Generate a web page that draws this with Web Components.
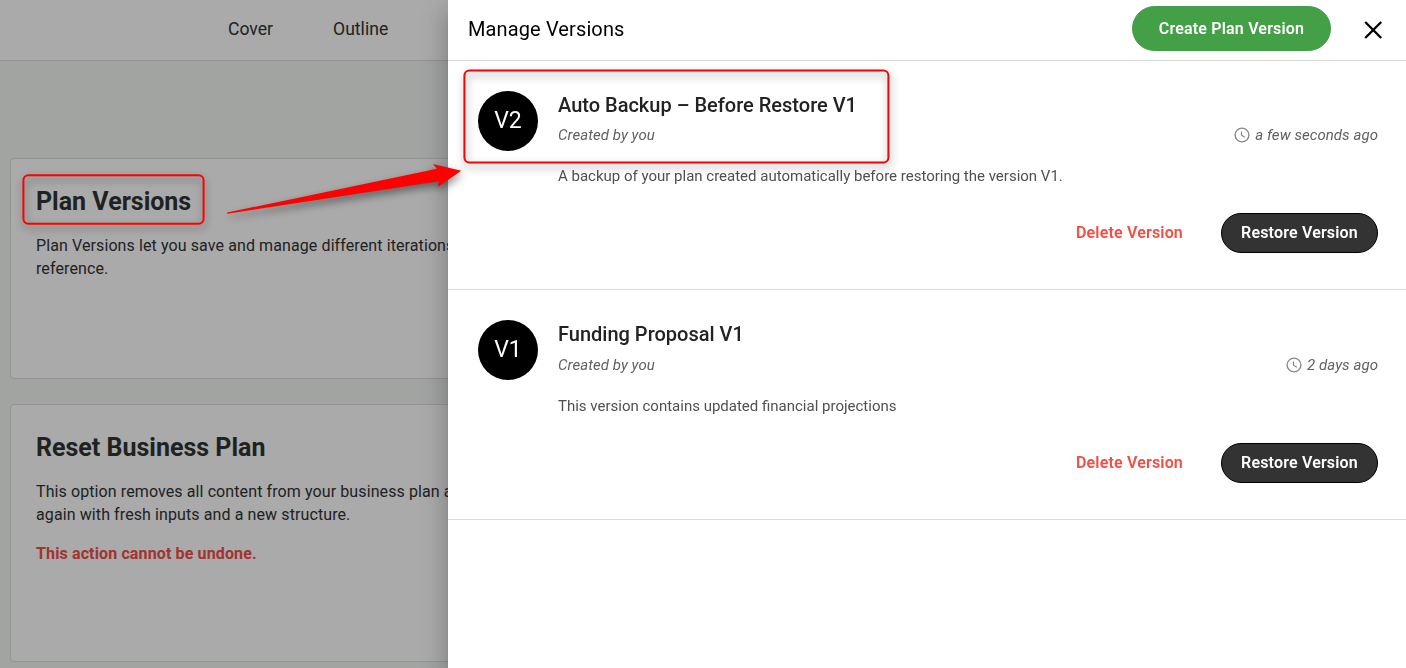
<!DOCTYPE html>
<html lang="en">
<head>
<meta charset="utf-8">
<title>Manage Versions</title>
<style>
    html, body {
        margin: 0;
        height: 100%;
        overflow: hidden;
    }

    body {
        font-family: Roboto, "Liberation Sans", sans-serif;
        font-size: 16px;
        color: #303333;
        background: #f3f6f4;
    }
</style>
</head>
<body>

<template id="plan-page-template">
    <style>
        :host {
            display: block;
            height: 100vh;
            overflow: hidden;
        }

        nav {
            display: flex;
            gap: 60px;
            height: 58px;
            padding: 0 0 2px 228px;
            align-items: center;
            background: white;
            border-bottom: 1px solid #dcdfdd;
            font-size: 17.6px;
            line-height: 24px;
        }

        main {
            display: flex;
            flex-direction: column;
            gap: 25px;
            padding: 97px 10px 0;
        }
    </style>
    <nav><span>Cover</span><span>Outline</span></nav>
    <main><slot></slot></main>
</template>

<template id="plan-card-template">
    <style>
        :host {
            display: block;
            box-sizing: border-box;
            padding: 26px 25px 0;
            background: white;
            border: 1px solid #dcdfdd;
            border-radius: 4px;
        }

        h2 {
            margin: 0 0 15px;
            font-size: 25px;
            line-height: 34px;
            font-weight: 700;
        }

        .text {
            line-height: 23px;
            letter-spacing: .1px;
            white-space: nowrap;
        }

        .warning {
            margin-top: 16px;
            line-height: 23px;
            font-weight: 700;
            letter-spacing: .13px;
            color: #f44d47;
        }
    </style>
    <h2><slot name="title"></slot></h2>
    <div class="text"><slot></slot></div>
    <div class="warning"><slot name="warning"></slot></div>
</template>

<template id="side-drawer-template">
    <style>
        :host {
            position: fixed;
            inset: 0;
            display: flex;
            justify-content: flex-end;
            background: rgba(0, 0, 0, .335);
        }

        .panel {
            width: 958px;
            background: white;
            box-shadow: 0 8px 10px -5px rgba(0, 0, 0, .2),
                        0 16px 24px 2px rgba(0, 0, 0, .14),
                        0 6px 30px 5px rgba(0, 0, 0, .12);
        }

        header {
            display: flex;
            align-items: center;
            height: 57px;
            padding: 0 21px 3px 20px;
            border-bottom: 1px solid #dcdcdc;
            color: black;
        }

        h1 {
            flex: 1;
            margin: 0;
            font-size: 20px;
            line-height: 26px;
            font-weight: 400;
            letter-spacing: .12px;
        }

        .close {
            display: block;
            margin-left: 30px;
        }
    </style>
    <div class="panel">
        <header>
            <h1><slot name="title"></slot></h1>
            <slot name="action"></slot>
            <svg class="close" width="24" height="24" viewBox="0 0 24 24" fill="none" stroke="#000" stroke-width="2.4">
                <path d="M4.2 5 20.2 21M20.2 5 4.2 21"/>
            </svg>
        </header>
        <slot></slot>
    </div>
</template>

<template id="pill-button-template">
    <style>
        :host {
            display: block;
        }

        button {
            display: block;
            box-sizing: border-box;
            width: 157px;
            height: 40px;
            padding: 0;
            border: 1px solid black;
            border-radius: 23px;
            background: #333;
            color: white;
            font: 600 16px/20px Roboto, "Liberation Sans", sans-serif;
            letter-spacing: .18px;
            white-space: nowrap;
        }

        :host([kind="primary"]) button {
            width: 199px;
            height: 45px;
            border-color: #43a047;
            background: #43a047;
        }

        :host([kind="danger"]) button {
            width: auto;
            border-color: transparent;
            background: none;
            color: #f44d41;
        }
    </style>
    <button><slot></slot></button>
</template>

<template id="version-item-template">
    <style>
        :host {
            display: flex;
            box-sizing: border-box;
            gap: 20px;
            height: 229px;
            padding: 30px 28px 0 30px;
            border-bottom: 1px solid #dcdcdc;
        }

        .badge {
            display: flex;
            flex: none;
            justify-content: center;
            width: 60px;
            height: 60px;
            border-radius: 50%;
            background: black;
            color: white;
            font-size: 23px;
            line-height: 59px;
        }

        .body {
            flex: 1;
        }

        h3 {
            margin: 0;
            font-size: 20px;
            line-height: 28px;
            font-weight: 500;
            color: #222;
        }

        .meta {
            display: flex;
            justify-content: space-between;
            margin-top: var(--meta-gap, 5px);
            font-size: 15px;
            line-height: 22px;
            font-style: italic;
            letter-spacing: .06px;
            color: #616161;
        }

        .time {
            display: flex;
            align-items: center;
            gap: 5px;
        }

        p {
            margin: 19px 0 0;
            font-size: 15px;
            line-height: 22px;
            color: #505050;
        }

        .actions {
            display: flex;
            justify-content: flex-end;
            gap: 37px;
            margin-top: 26px;
        }
    </style>
    <div class="badge"><slot name="badge"></slot></div>
    <div class="body">
        <h3><slot name="name"></slot></h3>
        <div class="meta">
            <span><slot name="author"></slot></span>
            <span class="time">
                <svg width="16" height="16" viewBox="0 0 16 16" fill="none" stroke="#888" stroke-width="1.4">
                    <circle cx="8" cy="8" r="6.9"/>
                    <path d="M7.5 4.4v3.8l3.4 2" stroke-width="1.2"/>
                </svg>
                <slot name="time"></slot>
            </span>
        </div>
        <p><slot></slot></p>
        <div class="actions">
            <pill-button kind="danger">Delete Version</pill-button>
            <pill-button>Restore Version</pill-button>
        </div>
    </div>
</template>

<template id="callout-layer-template">
    <style>
        :host {
            position: fixed;
            inset: 0;
            pointer-events: none;
        }

        svg {
            display: block;
            filter: drop-shadow(1px 4px 4px rgba(0, 0, 0, .45));
        }
    </style>
    <svg width="1406" height="668" viewBox="0 0 1406 668" fill="none" stroke="#f00" stroke-width="2">
        <rect x="23.4" y="175.2" width="180.2" height="48.6" rx="5"/>
        <rect x="464.4" y="70.4" width="424" height="92" rx="5"/>
        <path d="M227 212.6 437 168.8 433 164 461.3 170.7 437.6 187 439 181.2 227.3 213.8Z" fill="#f00" stroke="none"/>
    </svg>
</template>

<plan-page>
    <plan-card style="height: 221px">
        <span slot="title">Plan Versions</span>
        Plan Versions let you save and manage different iterations<br>reference.
    </plan-card>
    <plan-card style="height: 258px">
        <span slot="title">Reset Business Plan</span>
        This option removes all content from your business plan a<br>again with fresh inputs and a new structure.
        <span slot="warning">This action cannot be undone.</span>
    </plan-card>
</plan-page>

<side-drawer>
    <span slot="title">Manage Versions</span>
    <pill-button slot="action" kind="primary">Create Plan Version</pill-button>
    <version-item>
        <span slot="badge">V2</span>
        <span slot="name">Auto Backup – Before Restore V1</span>
        <span slot="author">Created by you</span>
        <span slot="time">a few seconds ago</span>
        A backup of your plan created automatically before restoring the version V1.
    </version-item>
    <version-item style="height: 230px; --meta-gap: 6px">
        <span slot="badge">V1</span>
        <span slot="name">Funding Proposal V1</span>
        <span slot="author">Created by you</span>
        <span slot="time">2 days ago</span>
        This version contains updated financial projections
    </version-item>
</side-drawer>

<callout-layer></callout-layer>

<script>
    class TemplateElement extends HTMLElement {
        connectedCallback() {
            if (this.shadowRoot) return;
            const shadowRoot = this.attachShadow({ mode: "open" });
            const template = document.getElementById(`${this.localName}-template`).content;
            shadowRoot.appendChild(template.cloneNode(true));
        }
    }

    class PlanPage extends TemplateElement {}
    class PlanCard extends TemplateElement {}
    class SideDrawer extends TemplateElement {}
    class PillButton extends TemplateElement {}
    class VersionItem extends TemplateElement {}
    class CalloutLayer extends TemplateElement {}

    customElements.define('plan-page', PlanPage);
    customElements.define('plan-card', PlanCard);
    customElements.define('side-drawer', SideDrawer);
    customElements.define('pill-button', PillButton);
    customElements.define('version-item', VersionItem);
    customElements.define('callout-layer', CalloutLayer);
</script>
</body>
</html>
